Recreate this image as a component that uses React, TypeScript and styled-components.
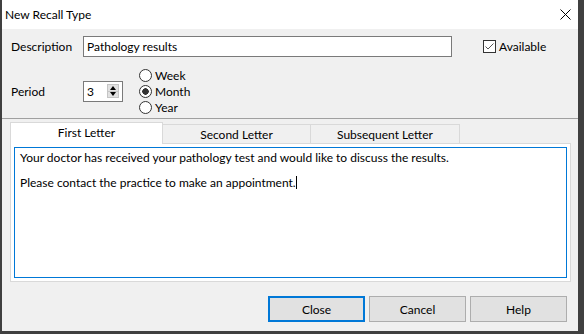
import styled, { createGlobalStyle, css } from "styled-components"

const GlobalStyle = createGlobalStyle`
  html, body {
    margin: 0;
    padding: 0;
    background: #404040;
  }
  body {
    font-family: Lato, "Open Sans", "Noto Sans", sans-serif;
    font-size: 12px;
    color: #000;
  }
`

const Window = styled.div`
  margin-left: 2px;
  width: 576px;
  height: 331px;
  background: #f0f0f0;
  display: flex;
  flex-direction: column;
`

const TitleBar = styled.div`
  height: 29px;
  background: #fff;
  display: flex;
  align-items: center;
  justify-content: space-between;
  padding: 0 7px 0 3px;
  font-size: 12px;
  .close {
    width: 11px;
    height: 11px;
  }
`

const Top = styled.div`
  padding: 7px 0 0 9px;
`

const Row = styled.div`
  display: flex;
  align-items: center;
`

const Label = styled.div`
  width: 72px;
`

const TextInput = styled.div`
  width: 369px;
  height: 21px;
  box-sizing: border-box;
  border: 1px solid #7a7a7a;
  background: #fff;
  padding: 0 3px;
  display: flex;
  align-items: center;
`

const Check = styled.label`
  margin-left: 31px;
  display: flex;
  align-items: center;
  gap: 3px;
  .box {
    width: 13px;
    height: 13px;
    box-sizing: border-box;
    border: 1px solid #333;
    background: #fff;
    display: flex;
    align-items: center;
    justify-content: center;
  }
`

const PeriodRow = styled(Row)`
  margin-top: 10px;
  height: 48px;
`

const Spinner = styled.div`
  width: 40px;
  height: 21px;
  box-sizing: border-box;
  border: 1px solid #7a7a7a;
  background: #fff;
  display: flex;
  align-items: center;
  justify-content: space-between;
  padding: 0 3px 0 3px;
`

const SpinButtons = styled.div`
  display: flex;
  flex-direction: column;
  width: 12px;
  height: 14px;
`

const SpinBtn = styled.div<{ $down?: boolean }>`
  flex: 1;
  background: #e1e1e1;
  border: 1px solid #c5c5c5;
  ${({ $down }) => ($down ? css`border-top: none;` : "")}
  display: flex;
  align-items: center;
  justify-content: center;
  &::after {
    content: "";
    border-left: 3.5px solid transparent;
    border-right: 3.5px solid transparent;
    ${({ $down }) =>
      $down
        ? css`border-top: 4px solid #000;`
        : css`border-bottom: 4px solid #000;`}
  }
`

const Radios = styled.div`
  margin-left: 16px;
  display: flex;
  flex-direction: column;
`

const Radio = styled.div<{ $on?: boolean }>`
  height: 16px;
  display: flex;
  align-items: center;
  gap: 3px;
  &::before {
    content: "";
    width: 13px;
    height: 13px;
    box-sizing: border-box;
    border-radius: 50%;
    border: 1px solid #333;
    background: ${({ $on }) =>
      $on ? "radial-gradient(circle, #333 0 3px, #fff 3.5px)" : "#fff"};
  }
`

const TabArea = styled.div`
  margin-top: 3px;
  border-top: 1px solid #a0a0a0;
  padding: 3px 7px 0 8px;
  display: flex;
  flex-direction: column;
`

const Tabs = styled.div`
  display: flex;
  align-items: flex-end;
  height: 21px;
  position: relative;
  z-index: 1;
`

const Tab = styled.div<{ $active?: boolean; $w: number }>`
  width: ${({ $w }) => $w}px;
  box-sizing: border-box;
  display: flex;
  align-items: center;
  justify-content: center;
  border: 1px solid #d9d9d9;
  ${({ $active }) =>
    $active
      ? css`
          height: 22px;
          margin-bottom: -1px;
          background: #fff;
          border-bottom: none;
          padding-bottom: 3px;
        `
      : css`
          height: 19px;
          background: #f0f0f0;
          border-left: none;
          border-bottom: none;
        `}
`

const Panel = styled.div`
  height: 139px;
  box-sizing: border-box;
  border: 1px solid #d9d9d9;
  background: #fff;
  padding: 3px;
`

const Editor = styled.div`
  height: 100%;
  box-sizing: border-box;
  border: 1px solid #0078d7;
  padding: 2px 5px;
  p {
    margin: 0;
    line-height: 15px;
  }
  p + p {
    margin-top: 10px;
  }
  .caret {
    display: inline-block;
    width: 1px;
    height: 13px;
    background: #000;
    vertical-align: -2px;
  }
`

const Buttons = styled.div`
  margin-top: 14px;
  padding-right: 11px;
  display: flex;
  justify-content: flex-end;
  gap: 4px;
`

const Button = styled.div<{ $default?: boolean }>`
  width: 97px;
  height: 26px;
  box-sizing: border-box;
  background: #e1e1e1;
  border: ${({ $default }) =>
    $default ? "2px solid #0078d7" : "1px solid #adadad"};
  display: flex;
  align-items: center;
  justify-content: center;
`

const App = () => {
  return (
    <>
      <GlobalStyle />
      <Window>
        <TitleBar>
          <span>New Recall Type</span>
          <svg className="close" viewBox="0 0 11 11">
            <path d="M0.5 0.5L10.5 10.5M10.5 0.5L0.5 10.5" stroke="#000" strokeWidth="1" />
          </svg>
        </TitleBar>
        <Top>
          <Row>
            <Label>Description</Label>
            <TextInput>Pathology results</TextInput>
            <Check>
              <span className="box">
                <svg width="11" height="11" viewBox="0 0 11 11">
                  <path d="M1.5 5.5L4 8L9.5 2.5" fill="none" stroke="#555" strokeWidth="1" />
                </svg>
              </span>
              Available
            </Check>
          </Row>
          <PeriodRow>
            <Label>Period</Label>
            <Spinner>
              <span>3</span>
              <SpinButtons>
                <SpinBtn />
                <SpinBtn $down />
              </SpinButtons>
            </Spinner>
            <Radios>
              <Radio>Week</Radio>
              <Radio $on>Month</Radio>
              <Radio>Year</Radio>
            </Radios>
          </PeriodRow>
        </Top>
        <TabArea>
          <Tabs>
            <Tab $active $w={153}>First Letter</Tab>
            <Tab $w={148}>Second Letter</Tab>
            <Tab $w={149}>Subsequent Letter</Tab>
          </Tabs>
          <Panel>
            <Editor>
              <p>Your doctor has received your pathology test and would like to discuss the results.</p>
              <p>
                Please contact the practice to make an appointment.<span className="caret" />
              </p>
            </Editor>
          </Panel>
        </TabArea>
        <Buttons>
          <Button $default>Close</Button>
          <Button>Cancel</Button>
          <Button>Help</Button>
        </Buttons>
      </Window>
    </>
  )
}

export default App
